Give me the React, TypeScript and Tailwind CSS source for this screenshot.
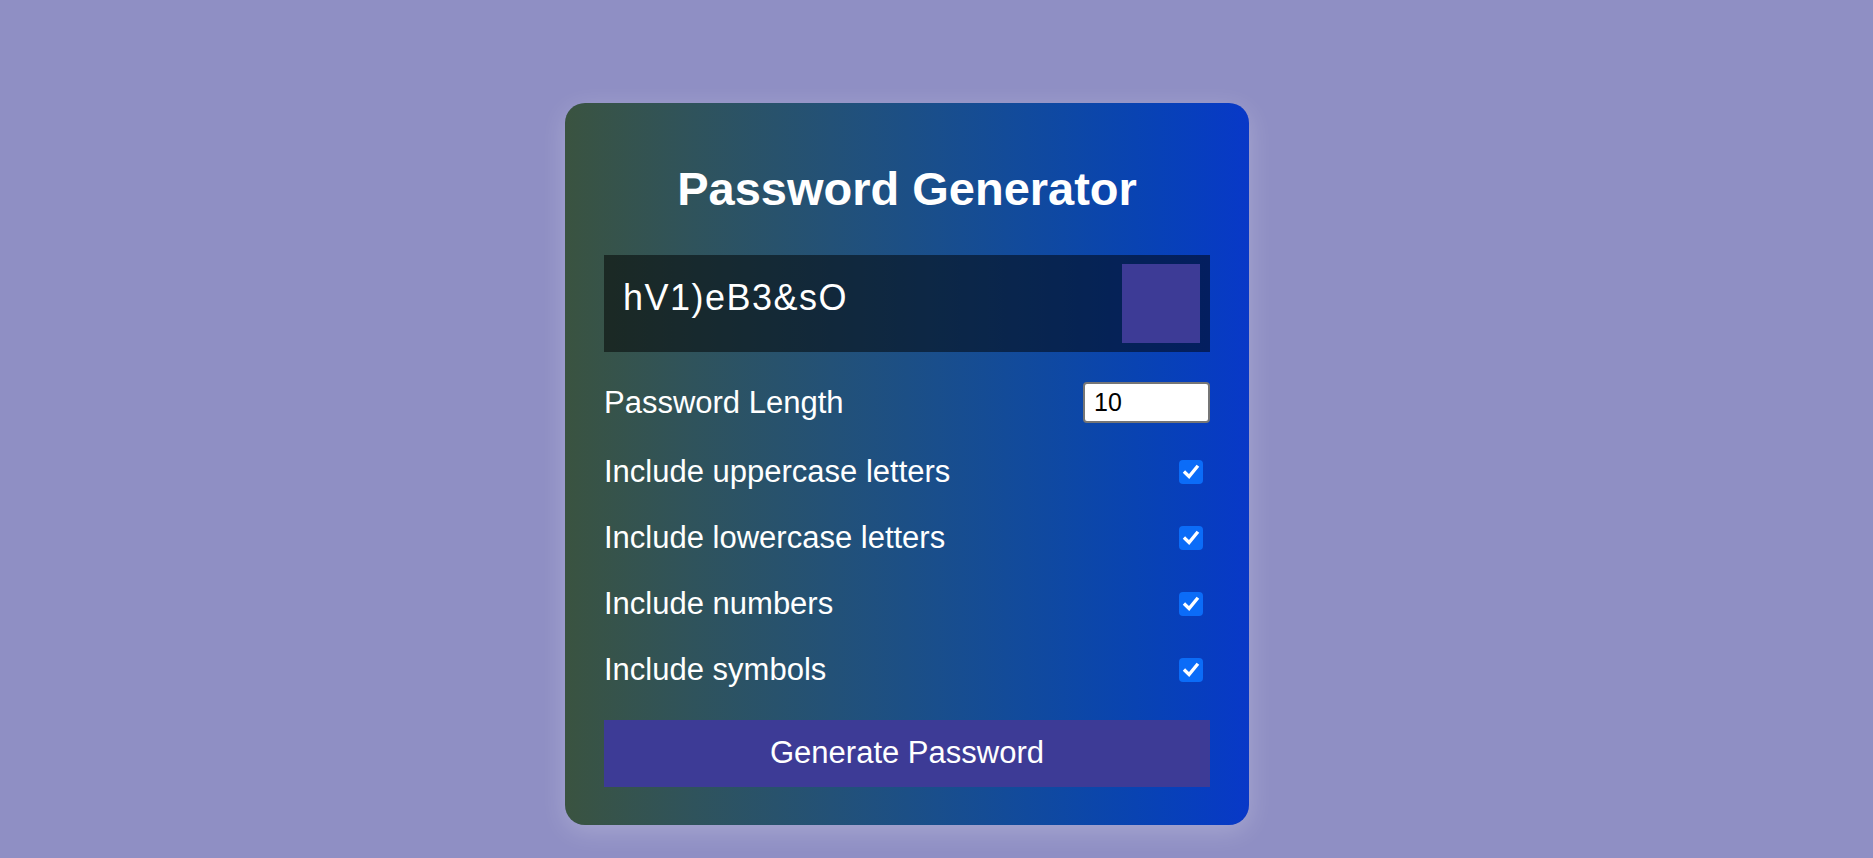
import { useState } from 'react';

const options = [
  { key: 'upper', label: 'Include uppercase letters' },
  { key: 'lower', label: 'Include lowercase letters' },
  { key: 'numbers', label: 'Include numbers' },
  { key: 'symbols', label: 'Include symbols' }
];

const CheckBox = ({ checked, onChange }: { checked: boolean; onChange: () => void }) => (
  <button
    type="button"
    onClick={onChange}
    className={
      checked
        ? 'mr-[7px] flex h-[24px] w-[24px] items-center justify-center rounded-[4px] bg-[#0b6cf8]'
        : 'mr-[7px] flex h-[24px] w-[24px] items-center justify-center rounded-[4px] border-2 border-[#767676] bg-white'
    }
  >
    {checked && (
      <svg width="18" height="18" viewBox="0 0 16 16" fill="none">
        <path d="M2.8 8.6 L6.3 12 L13.2 3.6" stroke="white" strokeWidth="3" strokeLinecap="square" strokeLinejoin="miter" />
      </svg>
    )}
  </button>
);

export default function App() {
  const [length, setLength] = useState('10');
  const [checks, setChecks] = useState<Record<string, boolean>>({
    upper: true,
    lower: true,
    numbers: true,
    symbols: true
  });

  return (
    <div
      className="flex min-h-screen justify-center bg-[#8f8fc4] pt-[103px] pr-[59px]"
      style={{ fontFamily: '"Liberation Sans", Arial, sans-serif' }}
    >
      <div className="h-fit w-[684px] rounded-[20px] bg-gradient-to-r from-[#3a5340] to-[#0838c8] px-[39px] pt-[59px] pb-[38px] text-white shadow-[0_6px_26px_rgba(255,255,255,0.22)]">
        <h1 className="text-center text-[47px] leading-[54px] font-bold">Password Generator</h1>

        {/* Result */}
        <div className="mt-[39px] flex h-[97px] items-start justify-between bg-black/50 py-[9px] pr-[10px] pl-[19px]">
          <span className="pt-[13px] text-[36px] leading-[41px] tracking-[1.5px]">hV1)eB3&amp;sO</span>
          <div className="h-[79px] w-[78px] bg-[#3d3b96]" />
        </div>

        {/* Settings */}
        <div className="mt-[30px] flex h-[41px] items-center justify-between">
          <span className="text-[31px] leading-[36px]">Password Length</span>
          <input
            value={length}
            onChange={(e) => setLength(e.target.value)}
            className="h-[41px] w-[127px] rounded-[4px] border-2 border-[#767676] bg-white px-[9px] text-[25px] text-black outline-none"
          />
        </div>

        <div className="mt-[31px] flex flex-col gap-[30px]">
          {options.map((o) => (
            <div key={o.key} className="flex h-[36px] items-center justify-between">
              <span className="text-[31px] leading-[36px]">{o.label}</span>
              <CheckBox
                checked={checks[o.key]}
                onChange={() => setChecks({ ...checks, [o.key]: !checks[o.key] })}
              />
            </div>
          ))}
        </div>

        <button
          type="button"
          className="mt-[32px] flex h-[67px] w-full items-center justify-center bg-[#3d3b96] text-[31px] text-white"
        >
          Generate Password
        </button>
      </div>
    </div>
  );
}
